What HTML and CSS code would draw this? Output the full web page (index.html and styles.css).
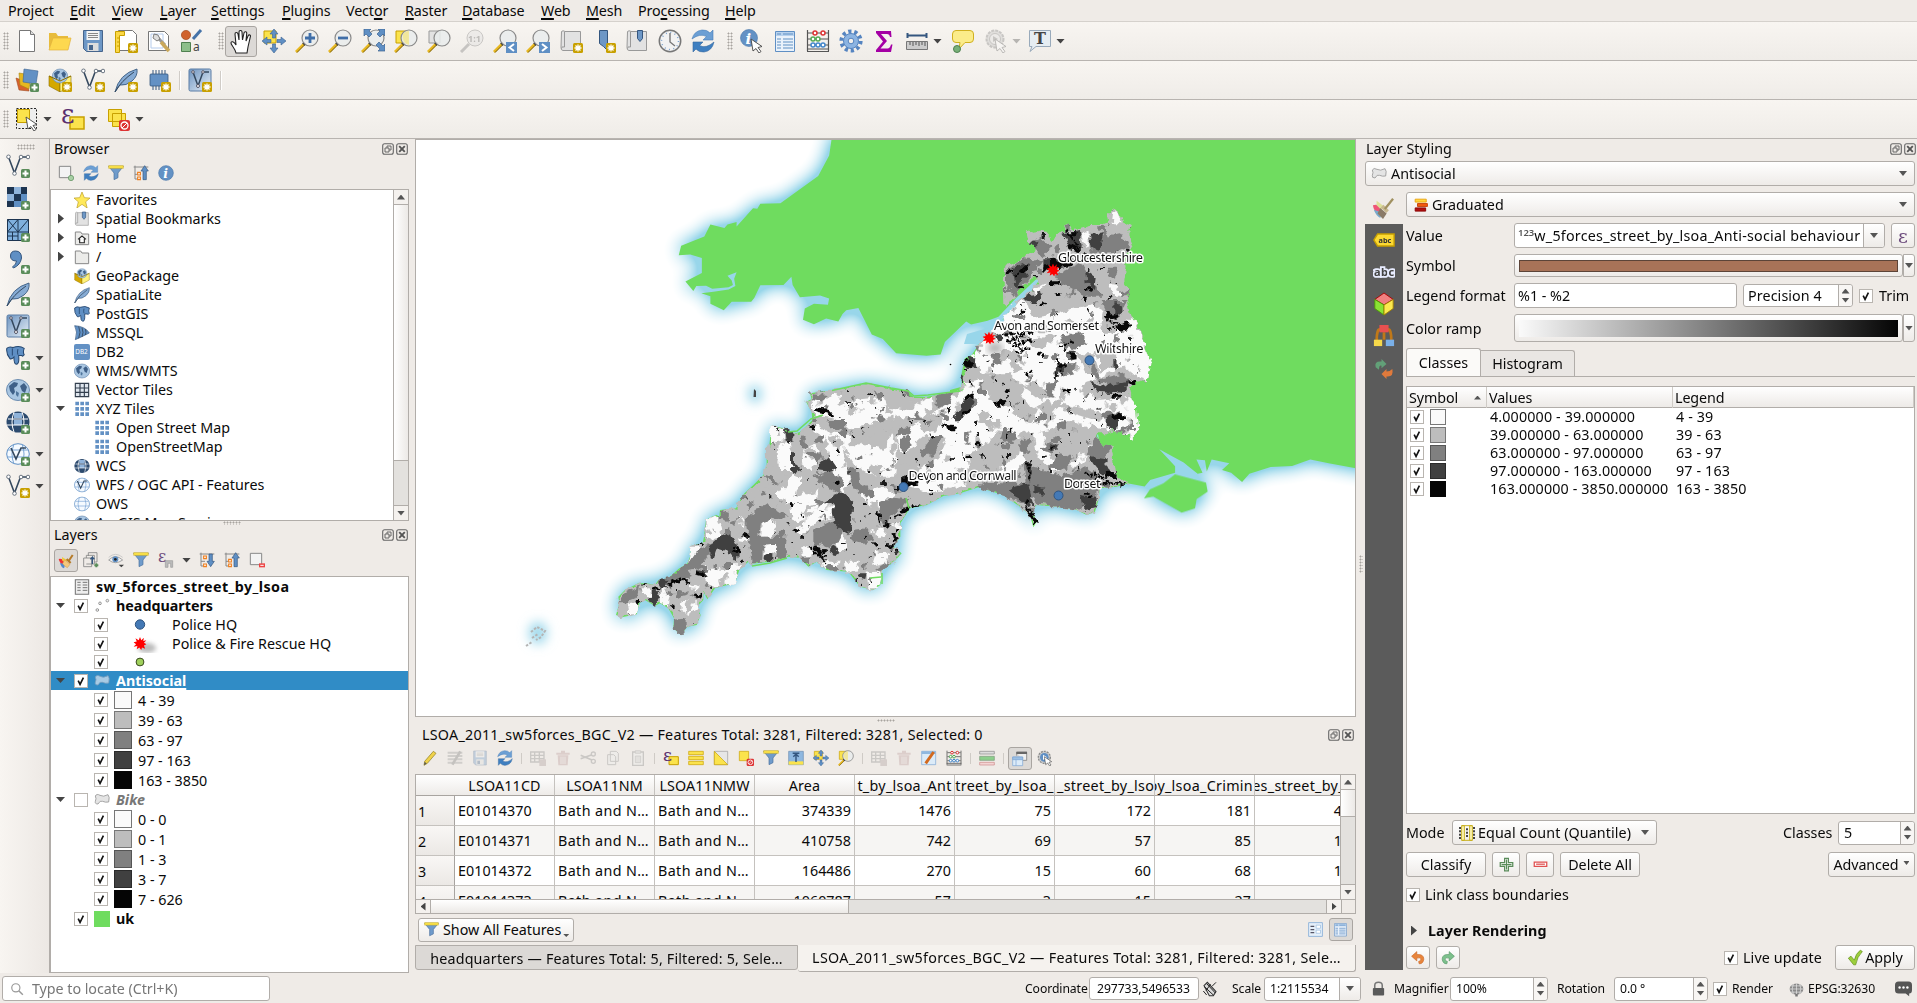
FILE: index.html
```html
<!DOCTYPE html>
<html lang="en">
<head>
<meta charset="utf-8">
<title>QGIS</title>
<link rel="stylesheet" href="styles.css">
</head>
<body>
<svg width="0" height="0" class="defs">
<defs>
<linearGradient id="gPale" x1="0" y1="0" x2="1" y2="1"><stop offset="0" stop-color="#6d94c0"/><stop offset="1" stop-color="#e8f0f8"/></linearGradient>
<symbol id="plus" viewBox="0 0 24 24"><rect x="15" y="15" width="9" height="9" rx="1.500" fill="#5a8c5a"/><path d="M19.500 16.500v6M16.500 19.500h6" stroke="#fff" stroke-width="2"/></symbol>
<symbol id="star" viewBox="0 0 24 24"><rect x="14" y="14" width="10" height="10" rx="1.500" fill="#c8a000"/><path d="M19 15.500v7M15.500 19h7M16.500 16.500l5 5M21.500 16.500l-5 5" stroke="#fff" stroke-width="1.300"/></symbol>
<symbol id="new" viewBox="0 0 24 24"><path d="M4.500 1.500h11l4 4v17h-15z" fill="#fff" stroke="#777"/><path d="M15.500 1.500v4h4" fill="#ddd" stroke="#777"/></symbol>
<symbol id="open" viewBox="0 0 24 24"><path d="M1 20V4h7l2 3h10v3H6z" fill="#e8bc3c"/><path d="M1 21L5 9h18l-3 12z" fill="#fdd84f" stroke="#e2b23a" stroke-width=".7"/></symbol>
<symbol id="save" viewBox="0 0 24 24"><path d="M2.500 1.500h19v21h-16l-3-3z" fill="#6d97c6" stroke="#46658c"/><path d="M5.500 2h13v9h-13z" fill="#f4f4f4"/><path d="M7 4.500h10M7 6.500h10M7 8.500h10" stroke="#888"/><path d="M6.500 14h11v8h-11z" fill="#ddd"/><path d="M8 16h4v5H8z" fill="#46658c"/></symbol>
<symbol id="layoutn" viewBox="0 0 24 24"><path d="M4.500 1.500h14l4 4v16h-18z" fill="#fff" stroke="#777"/><path d="M1.500 2.500h9v4h-5v17h-4z" fill="#fbd745" stroke="#c8a000"/><path d="M3 9h2M3 13h2M3 17h2" stroke="#c8a000"/><use href="#star"/></symbol>
<symbol id="layouts" viewBox="0 0 24 24"><path d="M1.500 2.500h16l4 4v15h-20z" fill="#fff" stroke="#777"/><path d="M4 5h12v14H4z" fill="#fff" stroke="#b6ccec"/><path d="M8 6l10 10" stroke="#999" stroke-width="3"/><path d="M7 5l4 1 2 4-3 2-4-3z" fill="#ddd" stroke="#666" stroke-width=".8"/><path d="M14 13l8 9" stroke="#caa85a" stroke-width="3.500"/></symbol>
<symbol id="stylem" viewBox="0 0 24 24"><circle cx="6" cy="6" r="4.600" fill="#d0622c" stroke="#a04a20" stroke-width=".7"/><path d="M13 10l8-9" stroke="#4673a8" stroke-width="3"/><path d="M1.500 13.500h9v9h-9z" fill="#8dbf8a" stroke="#4f8050"/><text x="13" y="22" font-size="12" fill="#444" class="sym">a</text></symbol>
<symbol id="hand" viewBox="0 0 24 24"><path d="M7 23c-1-5-5-8-5-10 0-2 3-2 5 2L6 4c0-2 2.500-2 3 0l1 6V2c0-2 3-2 3 0l.5 8L15 3c.5-2 3-1.500 2.700.5L17 11l2-5c1-2 3-1 2.300 1L19 17l-1 6z" fill="#fff" stroke="#222" stroke-width="1.100"/></symbol>
<symbol id="panm" viewBox="0 0 24 24"><path d="M2 2h12v12H2z" fill="#fbe34c" stroke="#c8a000"/><path d="M12 0l4 5h-2.500v4h-3V5H8zM12 24l-4-5h2.500v-4h3v4H16zM0 12l5-4v2.500h4v3H5V16zM24 12l-5 4v-2.500h-4v-3h4V8z" fill="#5f8fc4" stroke="#3c6390" stroke-width=".6"/></symbol>
<symbol id="lens" viewBox="0 0 24 24"><path d="M1 23l8.500-8.500" stroke="#e8b820" stroke-width="2.800"/><path d="M2 23.500l8-8" stroke="#5a4a10" stroke-width=".8"/><path d="M8.500 15.500l1.500-1.500" stroke="#222" stroke-width="3.500"/><circle cx="15" cy="9" r="8" fill="#e9ecec" fill-opacity=".85" stroke="#8a8a8a" stroke-width="1.200"/></symbol>
<symbol id="zin" viewBox="0 0 24 24"><use href="#lens"/><path d="M15 4v10M10 9h10" stroke="#3f6ea8" stroke-width="2.800"/></symbol>
<symbol id="zout" viewBox="0 0 24 24"><use href="#lens"/><path d="M10 9h10" stroke="#3f6ea8" stroke-width="2.800"/></symbol>
<symbol id="zfull" viewBox="0 0 24 24"><use href="#lens"/><path d="M3 0h7L8 2l3 3-3 3-3-3-2 2zM24 0v7l-2-2-3 3-3-3 3-3-2-2zM24 22h-7l2-2-4-4 3-3 4 4 2-2z" fill="#5f8fc4" stroke="#3c6390" stroke-width=".7"/></symbol>
<symbol id="zsel" viewBox="0 0 24 24"><path d="M2 2h11v12H2z" fill="#fbe34c" stroke="#c8a000"/><use href="#lens"/><path d="M9 5q5-4 6-3v14q-7-2-6-11z" fill="#f2e68c" opacity=".8"/></symbol>
<symbol id="zlay" viewBox="0 0 24 24"><path d="M2 2h11v12H2z" fill="#e2e2e2" stroke="#999"/><use href="#lens"/></symbol>
<symbol id="znat" viewBox="0 0 24 24"><g opacity=".35"><circle cx="15" cy="9" r="8" fill="#ddd" stroke="#777"/><path d="M1 23l8-8" stroke="#777" stroke-width="3"/><text x="8" y="12.500" font-size="9" font-weight="bold" fill="#555" class="sym">1:1</text></g></symbol>
<symbol id="zlast" viewBox="0 0 24 24"><use href="#lens"/><path d="M13 13h11v11H13z" fill="#5f8fc4"/><path d="M21 15l-4.500 3.500L21 22" fill="none" stroke="#fff" stroke-width="2"/></symbol>
<symbol id="znext" viewBox="0 0 24 24"><use href="#lens"/><path d="M13 13h11v11H13z" fill="#5f8fc4"/><path d="M16 15l4.500 3.500L16 22" fill="none" stroke="#fff" stroke-width="2"/></symbol>
<symbol id="sheet" viewBox="0 0 24 24"><path d="M6 2.500h15.500v19H4q-2 0-2-3l.5-16Q4 1 6 2.500z" fill="#e2e2e2" stroke="#999"/><path d="M5.500 3v15q-3-1-3 1.500" fill="none" stroke="#999"/></symbol>
<symbol id="bmnew" viewBox="0 0 24 24"><use href="#sheet"/><use href="#star"/></symbol>
<symbol id="bm3d" viewBox="0 0 24 24"><path d="M7.500 1.500h8v20l-4-4-4-3z" fill="#6d97c6" stroke="#34567f"/><use href="#star"/></symbol>
<symbol id="bm" viewBox="0 0 24 24"><use href="#sheet"/><path d="M12.500 1.500h5v8l-2.500 3-2.500-3z" fill="#6d97c6" stroke="#34567f"/></symbol>
<symbol id="clock" viewBox="0 0 24 24"><circle cx="12" cy="12" r="10.700" fill="#f2f2f2" stroke="#777" stroke-width="1.500"/><circle cx="12" cy="12" r="8.500" fill="none" stroke="#7aa0cc" stroke-dasharray="1 3.450" stroke-width="1.500"/><path d="M12 4v9l5 4" fill="none" stroke="#777" stroke-width="1.400"/></symbol>
<symbol id="refresh" viewBox="0 0 24 24"><path d="M1 10Q3 2 11 1q5-.5 8 3l3-3v10H12l3.500-3.500Q9 4 1 10z" fill="#6c9fd4" stroke="#477db8" stroke-width=".6"/><path d="M23 13q-2 9-10 10-5 .5-8-3l-3 3V13h10l-3.500 3.500Q15 20 23 13z" fill="#3f7fc0" stroke="#3568a0" stroke-width=".6"/></symbol>
<symbol id="cursor" viewBox="0 0 24 24"><path d="M11 10l2 12 3-2.500 3 4.500 2-1.500-3-4 4-1z" fill="#fff" stroke="#444" stroke-width=".9"/></symbol>
<symbol id="ident" viewBox="0 0 24 24"><circle cx="9" cy="9" r="8.500" fill="#6391c4" stroke="#4a77aa" stroke-width=".6"/><text x="5.500" y="14.500" font-size="15" font-style="italic" font-weight="bold" fill="#fff" class="serif">i</text><use href="#cursor"/></symbol>
<symbol id="table" viewBox="0 0 24 24"><path d="M2.500 2.500h19v20h-19z" fill="#eaf2fb" stroke="#5f8fc4"/><path d="M3 3h18v4H3z" fill="#b8d2ee"/><path d="M4 5h4M10 5h10M4 10h4M10 10h10M4 13h4M10 13h10M4 16h4M10 16h10M4 19h4M10 19h10" stroke="#5f8fc4" stroke-width="1.200"/></symbol>
<symbol id="abacus" viewBox="0 0 24 24"><path d="M1.500 1v21M22.500 1v21M1 22.500h22M1 20h22M2 4h20M2 10h20M2 16h20" stroke="#555" fill="none" stroke-width="1.200"/><g fill="#fff" stroke-width="1.500"><g stroke="#d33"><circle cx="9" cy="4" r="2"/><circle cx="17" cy="4" r="2"/></g><g stroke="#5a5"><circle cx="7" cy="10" r="2"/><circle cx="12" cy="10" r="2"/></g><g stroke="#48c"><circle cx="7" cy="16" r="2"/><circle cx="12" cy="16" r="2"/><circle cx="17" cy="16" r="2"/></g></g></symbol>
<symbol id="gear" viewBox="0 0 24 24"><circle cx="12" cy="12" r="9.600" fill="none" stroke="#5584c0" stroke-width="4" stroke-dasharray="3.200 2.830"/><circle cx="12" cy="12" r="7.500" fill="#8cb4e2" stroke="#5584c0"/><circle cx="12" cy="12" r="2.800" fill="#f3f0ec" stroke="#5584c0"/></symbol>
<symbol id="sum" viewBox="0 0 24 24"><path d="M4 2h15l.5 6h-1.500q-.5-3-3-3H9l6 7-6.500 7.500h7q2.500 0 3.500-4h1.500L19 23H4v-2l7-8.500L4 4z" fill="#a400a4"/></symbol>
<symbol id="measure" viewBox="0 0 24 24"><path d="M2 6.500h20M2.500 4v5M21.500 4v5" stroke="#34567f" stroke-width="2"/><path d="M1.500 12.500h21v8h-21z" fill="#ccc" stroke="#777"/><path d="M5 13v3M8 13v4M11 13v3M14 13v4M17 13v3M20 13v4" stroke="#555"/></symbol>
<symbol id="tip" viewBox="0 0 24 24"><path d="M5 1.500h14q3.500 0 3.500 3.500v5q0 3.500-3.500 3.500h-5L8 20l1-6.500H5Q1.500 13.500 1.500 10V5Q1.500 1.500 5 1.500z" fill="#fbec8a" stroke="#d0b020"/><circle cx="6" cy="20" r="3.500" fill="#78b078" stroke="#4f8050"/></symbol>
<symbol id="action" viewBox="0 0 24 24"><circle cx="11" cy="10" r="8.500" fill="#bbb" stroke="#777" stroke-width="2" stroke-dasharray="3 1"/><circle cx="11" cy="10" r="5.500" fill="#ddd" stroke="#777"/><path d="M9 7l5 3-5 3z" fill="#777"/><use href="#cursor"/></symbol>
<symbol id="textan" viewBox="0 0 24 24"><path d="M1.500 1.500h21v16H8l-6 5 2-5H1.500z" fill="#e6edf2" stroke="#9ab"/><text x="6" y="15" font-size="16" font-weight="bold" fill="#444" class="serif">T</text></symbol>
<symbol id="dsm" viewBox="0 0 24 24"><path d="M1 10l11 4 2 9-10-1z" fill="#d8622c" stroke="#a04a20" stroke-width=".6"/><path d="M4 5l12 2-2 14-9-4z" fill="#e6b820" stroke="#a88510" stroke-width=".6"/><path d="M9 1l14 2-2 13-13-2z" fill="#6391c4" stroke="#3c6390" stroke-width=".6"/><use href="#plus"/></symbol>
<symbol id="globe0" viewBox="0 0 24 24"><ellipse cx="12" cy="12" rx="11.500" ry="10.500" fill="#a9c6e2" stroke="#6d8db0"/><path d="M3 8l5-4 4 1-1 3-3 2 1 4-2 3-3-4zM14 8l4-3 3 4-2 6-3-2z" fill="#3f6088"/><path d="M10 13l3 2-1 4-2-2z" fill="#4f759c"/></symbol>
<symbol id="gpk" viewBox="0 0 24 24"><path d="M1 8l11 5v11L1 18z" fill="#d4a800" stroke="#8a6d00" stroke-width=".6"/><path d="M12 13l11-5v10l-11 6z" fill="#fff27a" stroke="#8a6d00" stroke-width=".6"/><use href="#globe0" x="4" y="0" width="16" height="16"/><path d="M1 8l11 5 11-5" fill="none" stroke="#8a6d00"/></symbol>
<symbol id="vec" viewBox="0 0 24 24"><path d="M2.500 3l6 16L14.500 3h7" fill="none" stroke="#34485e" stroke-width="1.600"/><g fill="#fff" stroke="#6a7480"><circle cx="2.500" cy="2.800" r="1.800"/><circle cx="8.500" cy="19.500" r="1.800"/><circle cx="15" cy="3" r="1.800"/><circle cx="22" cy="3" r="1.800"/></g></symbol>
<symbol id="feather" viewBox="0 0 24 24"><path d="M1 24Q5 6 23 1q1 7-5 12T6 17z" fill="#86abd4" stroke="#3c5c80" stroke-width=".9"/><path d="M1 24Q7 13 20 4" stroke="#34485e" fill="none"/></symbol>
<symbol id="chip" viewBox="0 0 24 24"><path d="M6 2v20M9 2v20M12 2v20M15 2v20M18 2v20" stroke="#34567f"/><rect x="3" y="6" width="18" height="12" rx="1" fill="#6391c4" stroke="#34567f" stroke-width=".8"/></symbol>
<symbol id="virt" viewBox="0 0 24 24"><rect x="1" y="1" width="22" height="22" rx="1.500" fill="url(#gPale)" stroke="#5b7da5"/><path d="M5 4l5 14L15 4h6" fill="none" stroke="#34485e" stroke-width="1.500"/><g fill="#fff" stroke="#556"><circle cx="5" cy="4" r="1.300"/><circle cx="10" cy="18" r="1.500"/><circle cx="15" cy="4" r="1.300"/></g></symbol>
<symbol id="raster" viewBox="0 0 24 24"><path d="M1 1h20v20H1z" fill="#5f8fc4"/><path d="M1 1h7v7H1zM15 1h6v7h-6zM8 8h7v7H8zM1 15h7v6H1z" fill="#1d3450"/><path d="M8 1h7v7H8zM1 8h7v7H1z" fill="#8fb3da"/></symbol>
<symbol id="mesh" viewBox="0 0 24 24"><path d="M1.500 1.500h21v21h-21z" fill="#7fb0de" stroke="#1d3450"/><path d="M12 1.500v21M1.500 14h21M1.500 1.500L12 14M12 1.500L1.500 14M12 14L22.500 1.500M6.500 14v8M1.500 18h10.500" stroke="#1d3450" fill="none"/></symbol>
<symbol id="comma" viewBox="0 0 24 24"><path d="M4.500 6q0-5 5-5 6 0 6 7-1 7-8 10l-1-1q4-3 4-6-6 0-6-5z" fill="#5f8fc4" stroke="#34567f"/></symbol>
<symbol id="eleph" viewBox="0 0 24 24"><path d="M1 3q3-3 8-1 8-3 14 1-2 5 0 8-2 3-3 1l-4 0q1 11-3 11-3 0-3-9-3 3-5 2Q0 10 1 3z" fill="#5f8fc4" stroke="#25476f" stroke-width="1.300"/><path d="M8 3v9M15 4q-1 4 0 7" stroke="#25476f" fill="none" stroke-width="1.200"/></symbol>
<symbol id="wcs" viewBox="0 0 24 24"><ellipse cx="12" cy="12" rx="11.500" ry="10.500" fill="#2c4a6e"/><path d="M8 3h8v5H8zM8 10h8v5H8z" fill="#8fb3da"/><path d="M2 9h20M1 15h21M8 2q-4 10 0 20M16 2q4 10 0 20" stroke="#fff" fill="none"/></symbol>
<symbol id="ows" viewBox="0 0 24 24"><ellipse cx="12" cy="12" rx="11.300" ry="10.300" fill="#f5faff" stroke="#5f8fc4"/><path d="M2 8h20M1 15h22M8 2q-4 10 0 20M16 2q4 10 0 20" stroke="#7aa5d4" fill="none"/></symbol>
<symbol id="wfs" viewBox="0 0 24 24"><use href="#ows"/><path d="M5 6l5 11L15 6h5" fill="none" stroke="#34485e" stroke-width="1.600"/></symbol>
<symbol id="favs" viewBox="0 0 24 24"><path d="M12 0l3.500 8.500 8.500.6-6.500 5.600L19.700 24 12 18.500 4.300 24l2.200-9.300L0 9.100l8.500-.6z" fill="#ffe95a" stroke="#b99c20"/></symbol>
<symbol id="folder" viewBox="0 0 24 24"><path d="M2 3h8l2 3h10v16H2z" fill="#ececea" stroke="#888" stroke-width="1.500"/></symbol>
<symbol id="home" viewBox="0 0 24 24"><use href="#folder"/><path d="M6 14l6-5 6 5M8.500 13v6h7v-6" fill="#fff" stroke="#222" stroke-width="1.600"/></symbol>
<symbol id="mssql" viewBox="0 0 24 24"><path d="M1 1q5 9 1 21 9-4 21-10Q17 2 1 1z" fill="#5f8fc4" stroke="#34567f"/><path d="M7 2q4 9 0 18M12 4q3 7 0 14M17 6q2 5 0 9" stroke="#34485e" fill="none" stroke-width="1.300"/></symbol>
<symbol id="db2" viewBox="0 0 24 24"><rect width="24" height="24" rx="3" fill="#6391c4"/><text x="2" y="15.500" font-size="9.500" fill="#fff" class="sym">DB2</text></symbol>
<symbol id="vt" viewBox="0 0 24 24"><path d="M2 2h20v20H2zM9 2v20M15.500 2v20M2 9h20M2 15.500h20" stroke="#333f4e" fill="#dfe6ee" stroke-width="1.700"/></symbol>
<symbol id="xyz" viewBox="0 0 24 24"><path d="M2 1h5.500v5.500H2zM9.500 1H15v5.500H9.500zM17 1h5.500v5.500H17zM2 9h5.500v5.500H2zM9.500 9H15v5.500H9.500zM17 9h5.500v5.500H17zM2 17h5.500v5.500H2zM9.500 17H15v5.500H9.500zM17 17h5.500v5.500H17z" fill="#6391c4"/></symbol>
<symbol id="funnel" viewBox="0 0 24 24"><path d="M1 2l8 10v10l6-3v-7l8-10z" fill="#6f9bcb" stroke="#4a6f9c"/><path d="M1 1h22v4H1z" fill="#fbe34c" stroke="#c0a010" stroke-width=".7"/></symbol>
<symbol id="addb" viewBox="0 0 24 24"><path d="M2 2h17v17H2z" fill="#f3f3f3" stroke="#888" stroke-width="1.500"/><circle cx="19.500" cy="19.500" r="4" fill="#a8cfa4" stroke="#5a8c5a"/></symbol>
<symbol id="collapse" viewBox="0 0 24 24"><path d="M3 1v20h8M1 3h22M3 14h6" stroke="#888" fill="none" stroke-width="1.500"/><path d="M7 11h4v4H7zM7 18h4v4H7z" fill="#fff" stroke="#f08020" stroke-width="1.800"/><path d="M17.500 1l5.500 8h-3v13h-5V9h-3z" fill="#5f8fc4" stroke="#34567f"/></symbol>
<symbol id="expand" viewBox="0 0 24 24"><path d="M3 1v20h8M1 3h22M3 14h6" stroke="#888" fill="none" stroke-width="1.500"/><path d="M7 6h4v4H7zM7 18h4v4H7z" fill="#fff" stroke="#f08020" stroke-width="1.800"/><path d="M17.500 22l5.500-8h-3V3h-5v11h-3z" fill="#5f8fc4" stroke="#34567f"/></symbol>
<symbol id="info" viewBox="0 0 24 24"><circle cx="12" cy="12" r="11" fill="#6391c4" stroke="#4a77aa"/><text x="8" y="19" font-size="19" font-style="italic" font-weight="bold" fill="#fff" class="serif">i</text></symbol>
<symbol id="brush" viewBox="0 0 24 24"><path d="M1 9q5-1 9 3l-3 6q-4-2-6-9z" fill="#e33"/><path d="M3 15l8 2-2 6Q5 22 3 15z" fill="#58c"/><path d="M6 6l8 5-3 4-5-4z" fill="#ec4"/><path d="M10 10l8 7-4 5q-4-2-7-6z" fill="#f4c87c" stroke="#d09a50" stroke-width=".8"/><path d="M13 9l6 6" stroke="#b57a28" stroke-width="3"/><path d="M16 12l6-9" stroke="#b57a28" stroke-width="3"/></symbol>
<symbol id="addgrp" viewBox="0 0 24 24"><path d="M8 6V1h13v14h-4M5 9V5h12v13H5M1 9h12v13H1z" fill="none" stroke="#888" stroke-width="1.300"/><path d="M14 18V8l-3 3M14 8l3 3" stroke="#34567f" fill="none" stroke-width="2"/><path d="M20 17v6M17 20h6" stroke="#5a8c5a" stroke-width="3"/></symbol>
<symbol id="eye" viewBox="0 0 24 24"><path d="M1 12Q11 2 22 12 11 20 1 12z" fill="#f2f2f2" stroke="#999" stroke-width="1.300"/><path d="M1 8Q11-1 22 8" stroke="#bbb" fill="none"/><circle cx="11" cy="11" r="4.500" fill="#5f8fc4"/><circle cx="11" cy="11" r="2" fill="#222"/><path d="M16 19h8l-4 4z" fill="#444"/></symbol>
<symbol id="epsf" viewBox="0 0 24 24"><text x="0" y="15" font-size="24" fill="#6b4a7c" class="serif">ε</text><path d="M11 23V13h11v10h-3v-6h-4v6z" fill="#bbb" stroke="#999"/></symbol>
<symbol id="rml" viewBox="0 0 24 24"><path d="M2 2h17v17H2z" fill="#f3f3f3" stroke="#888" stroke-width="1.500"/><path d="M15 17h9v6h-9z" fill="#e44"/><path d="M17 20h5" stroke="#fff" stroke-width="1.500"/></symbol>
<symbol id="tbl" viewBox="0 0 24 24"><path d="M2 1h20v22H2z" fill="#eee" stroke="#777" stroke-width="1.600"/><path d="M5 5h5M13 5h7M5 9h5M13 9h7M5 13h5M13 13h7M5 17h5M13 17h7" stroke="#777" stroke-width="1.500"/></symbol>
<symbol id="pts" viewBox="0 0 24 24"><g fill="#eee" stroke="#999" stroke-width="1.500"><circle cx="5" cy="18" r="2"/><circle cx="9" cy="8" r="2"/><circle cx="20" cy="4" r="2"/></g></symbol>
<symbol id="poly" viewBox="0 0 24 24"><path d="M2 6q2-4 7-1t12-1q3 3 1 11-5 1-9-1t-7 4q-5 0-4-4 2-4 0-8z" fill="#e4e4e4" stroke="#999" stroke-width="1.300"/></symbol>
<symbol id="polyb" viewBox="0 0 24 24"><path d="M2 6q2-4 7-1t12-1q3 3 1 11-5 1-9-1t-7 4q-5 0-4-4 2-4 0-8z" fill="#a9cbe4" stroke="#7ba0bf" stroke-width="1.300"/></symbol>
<symbol id="chk" viewBox="0 0 14 14"><path d="M3.700 6.500l2.200 4.500L9.800 3" fill="none" stroke="#111" stroke-width="1.900"/></symbol>
<symbol id="pencil" viewBox="0 0 24 24"><path d="M3 23l1-6L17 2l4 3L8 20z" fill="#f0d24a" stroke="#8a7a20"/><path d="M3 23l1-5 3 2z" fill="#555"/></symbol>
<symbol id="lpencil" viewBox="0 0 24 24"><path d="M1 4h22M1 9h22M1 14h22M1 19h22" stroke="#999" stroke-width="3"/><path d="M8 22L20 2" stroke="#777" stroke-width="4"/></symbol>
<symbol id="addft" viewBox="0 0 24 24"><path d="M1 3h20v15H1zM1 8h20M1 13h20M7 3v15M14 3v15" fill="none" stroke="#888" stroke-width="2"/><path d="M14 14h10v10H14z" fill="#a99"/></symbol>
<symbol id="trash" viewBox="0 0 24 24"><path d="M2 4h20v3H2zM9 1h6v3H9zM4 8h16l-1 15H5z" fill="#b99"/><path d="M9 10v11M12 10v11M15 10v11" stroke="#fff"/></symbol>
<symbol id="cut" viewBox="0 0 24 24"><path d="M1 8l17 7M1 13l17-6" stroke="#888" stroke-width="2.500"/><circle cx="20" cy="6" r="3" fill="none" stroke="#888" stroke-width="2"/><circle cx="20" cy="17" r="3" fill="none" stroke="#888" stroke-width="2"/></symbol>
<symbol id="copy" viewBox="0 0 24 24"><path d="M8 2h9l3 3v12H8zM4 7h9l3 3v12H4z" fill="#eee" stroke="#888" stroke-width="1.500"/></symbol>
<symbol id="paste" viewBox="0 0 24 24"><path d="M4 3h16v20H4z" fill="#eee" stroke="#888" stroke-width="2"/><path d="M8 1h8v4H8zM8 9h8v10H8z" fill="#ccc" stroke="#888"/></symbol>
<symbol id="epsy" viewBox="0 0 24 24"><path d="M9 10h14v12H9z" fill="#fbe34c" stroke="#c8a000" stroke-width="1.500"/><text x="0" y="16" font-size="26" fill="#5a2f6e" class="serif">ε</text></symbol>
<symbol id="selall" viewBox="0 0 24 24"><path d="M1 2h22v5H1zM1 9.500h22v5H1zM1 17h22v5H1z" fill="#fbe34c" stroke="#c8a000"/></symbol>
<symbol id="inv" viewBox="0 0 24 24"><path d="M2 2h20v20H2z" fill="#e6e6e6" stroke="#999"/><path d="M2 2v20h20z" fill="#fbe34c" stroke="#c8a000"/></symbol>
<symbol id="desel" viewBox="0 0 24 24"><path d="M2 2h14v14H2z" fill="#fbe34c" stroke="#c8a000"/><rect x="13" y="13" width="11" height="11" rx="2" fill="#d33"/><circle cx="18.500" cy="18.500" r="3.500" fill="none" stroke="#fff" stroke-width="1.300"/><path d="M16 21l5-5" stroke="#fff"/></symbol>
<symbol id="seltool" viewBox="0 0 24 24"><path d="M1.500 1.500h20v20h-20z" fill="#eee" stroke="#222" stroke-dasharray="2 1.500"/><path d="M2.500 2.500h12v13h-12z" fill="#fbe34c" stroke="#c8a000"/><use href="#cursor"/></symbol>
<symbol id="desel2" viewBox="0 0 24 24"><path d="M1.500 2.500h13v12h-13zM5.500 6.500h13v13h-13z" fill="#fbe34c" stroke="#c8a000"/><rect x="12" y="13" width="11" height="11" rx="2" fill="#d33"/><circle cx="17.500" cy="18.500" r="3.500" fill="none" stroke="#fff" stroke-width="1.300"/><path d="M15 21l5-5" stroke="#fff"/></symbol>
<symbol id="top" viewBox="0 0 24 24"><path d="M1 2h22v20H1z" fill="#8fb8e0" stroke="#6a8cb0"/><path d="M1 17h22v5H1z" fill="#fbe34c"/><path d="M7 5h10M12 18V6M8 10l4-4 4 4" stroke="#34567f" stroke-width="2.200" fill="none"/></symbol>
<symbol id="condf" viewBox="0 0 24 24"><path d="M1 2h22v4H1z" fill="#ddd" stroke="#888"/><path d="M1 9.500h22v6H1z" fill="#8ccf8c" stroke="#7a9a7a"/><path d="M1 18.500h22v4H1z" fill="#f3d4d4" stroke="#c88"/></symbol>
<symbol id="dock" viewBox="0 0 24 24"><path d="M7 2h15v12h-6M7 2v5" fill="#eee" stroke="#888" stroke-width="1.300"/><path d="M6.500 1h16v3.500h-16z" fill="#666"/><path d="M1 9h15v13H1z" fill="#dcebf8" stroke="#7aa5d4"/><path d="M1 9h15v4H1zM6 13v9" fill="#9cc0e4" stroke="#7aa5d4"/></symbol>
<symbol id="pin" viewBox="0 0 24 24"><circle cx="11" cy="11" r="9" fill="#ccc" stroke="#8a8a8a" stroke-width="2" stroke-dasharray="3 1.500"/><circle cx="11" cy="11" r="6.500" fill="#5f8fc4"/><path d="M9 7l6 4-6 4z" fill="#fff"/><use href="#cursor"/></symbol>
<symbol id="calcp" viewBox="0 0 24 24"><path d="M1 2h21v20H1z" fill="#dcebf8" stroke="#7aa5d4"/><path d="M1 2h21v4H1z" fill="#8fb8e0"/><path d="M7 20L19 3" stroke="#d2691e" stroke-width="4.500"/></symbol>
<symbol id="form" viewBox="0 0 24 24"><path d="M1 1h22v22H1z" fill="#e6f0fa" stroke="#8fb3da" stroke-width="1.500"/><path d="M4 7h6M4 12h6M4 17h6" stroke="#556" stroke-width="2"/><path d="M13 5h7v5h-7zM13 13h7v5h-7z" fill="#fff" stroke="#8fb3da"/></symbol>
<symbol id="brush2" viewBox="0 0 24 24"><path d="M1 9q6-2 10 3l-4 6q-5-2-6-9z" fill="#e57"/><path d="M2 14l9 3-2 6Q4 20 2 14z" fill="#7ac"/><path d="M5 4l8 6-3 4-5-5z" fill="#dce09a"/><path d="M9 12l7 6-4 6q-3-3-6-6z" fill="#8a7a68"/><path d="M11 10l6 6" stroke="#c8b890" stroke-width="4"/><path d="M14 13l9-11" stroke="#a09060" stroke-width="2.500"/></symbol>
<symbol id="label" viewBox="0 0 24 24"><path d="M5 5.500h18v13H5l-4-6.500z" fill="#fbd934" stroke="#c8a000" stroke-width="1.500"/><text x="6" y="15" font-size="8" font-weight="bold" fill="#333" class="sym">abc</text></symbol>
<symbol id="mask" viewBox="0 0 24 24"><text x="1" y="16.500" font-size="12" font-weight="bold" fill="#444" stroke="#e8ecff" stroke-width="4" paint-order="stroke" textLength="22" class="sym">abc</text></symbol>
<symbol id="cube" viewBox="0 0 24 24"><path d="M12 0l10 7-10 6L2 7z" fill="#f08080" stroke="#a00"/><path d="M2 7l10 6v11L2 17z" fill="#8ae234" stroke="#4e9a06"/><path d="M22 7l-10 6v11l10-7z" fill="#fce94f" stroke="#a08000"/></symbol>
<symbol id="diagram" viewBox="0 0 24 24"><path d="M12 8v8M8 5Q4 4 4 17M16 5q4-1 4 12" fill="none" stroke="#c07818" stroke-width="3"/><path d="M7 0h10v8H7z" fill="#e85050"/><path d="M1 16h9v7H1z" fill="#f6d84a"/><path d="M14 16h9v7h-9z" fill="#7ab0e8"/></symbol>
<symbol id="hist" viewBox="0 0 24 24"><path d="M2 10q-2-8 7-7V0l6 6-6 5V8q-3-1-3 5z" fill="#62a078"/><path d="M22 12q2 10-7 9v3l-6-6 6-6v3q4 0 7-3z" fill="#e07a3c"/></symbol>
<symbol id="undo" viewBox="0 0 24 24"><path d="M1 9l9-8v5q12-1 12 8-1 8-8 8l-1-4q4-1 4-4-1-3-7-2v5z" fill="#e8853c" stroke="#c8682a"/></symbol>
<symbol id="redo" viewBox="0 0 24 24"><path d="M23 9l-9-8v5Q2 5 2 14q1 8 8 8l1-4q-4-1-4-4 1-3 7-2v5z" fill="#7cc08c" stroke="#4f9060"/></symbol>
<symbol id="grad" viewBox="0 0 24 24"><path d="M2 2h19v5H2z" fill="#ffd83c" stroke="#e8a010" stroke-width="1.500"/><path d="M6 9.500h17v5H6z" fill="#f45c10" stroke="#c03c00" stroke-width="1.500"/><path d="M2 17h18v5.500H2z" fill="#b01010" stroke="#800" stroke-width="1.500"/></symbol>
<symbol id="quant" viewBox="0 0 24 24"><path d="M4 1h4v22H4zM16 1h4v22h-4zM4 1h16M4 23h16" fill="#fff8c0" stroke="#c8b020" stroke-width="1.500"/><path d="M1.500 3v18M22.500 3v18M12 5v15" stroke="#222" stroke-width="2.500" stroke-dasharray="3 2"/></symbol>
<symbol id="addc" viewBox="0 0 24 24"><path d="M9 2h6v7h7v6h-7v7H9v-7H2V9h7z" fill="#fff" stroke="#5a8c5a" stroke-width="2"/><path d="M12 4v16M4 12h16" stroke="#5a8c5a" stroke-width="2"/></symbol>
<symbol id="remc" viewBox="0 0 24 24"><path d="M2 8h20v7H2z" fill="#fff" stroke="#e05050" stroke-width="2"/><path d="M5 11.500h14" stroke="#e05050" stroke-width="2"/></symbol>
<symbol id="okc" viewBox="0 0 24 24"><path d="M2 13l4-3 5 6Q13 6 20 1l3 2q-8 8-10 20h-3z" fill="#9ccf3c" stroke="#5a8a10"/></symbol>
<symbol id="flt" viewBox="0 0 12 12"><rect x=".7" y=".7" width="10.600" height="10.600" rx="2" fill="none" stroke="#666" stroke-width="1.100"/><path d="M3 5h4v4H3zM5 5V3h4v4H7" fill="none" stroke="#666"/></symbol>
<symbol id="cls" viewBox="0 0 12 12"><rect x=".7" y=".7" width="10.600" height="10.600" rx="2" fill="none" stroke="#666" stroke-width="1.100"/><path d="M3.200 3.200l5.600 5.600M8.800 3.200L3.200 8.800" stroke="#555" stroke-width="1.900"/></symbol>
<symbol id="search" viewBox="0 0 24 24"><circle cx="10" cy="10" r="7" fill="none" stroke="#999" stroke-width="2"/><path d="M15 15l7 7" stroke="#999" stroke-width="2.500"/></symbol>
<symbol id="mouse" viewBox="0 0 24 24"><path d="M3 7l5-5 13 14-4 6-6 0z" fill="#ddd" stroke="#333" stroke-width="1.600"/><path d="M3 8l14 13M7 4l13 14M6 14l7-9M2 15l5 6M15 8l6-6" stroke="#222" stroke-width="1.500"/></symbol>
<symbol id="lock" viewBox="0 0 24 24"><path d="M6 11V7q0-5 6-5t6 5v4" fill="none" stroke="#777" stroke-width="2.500"/><rect x="3" y="11" width="18" height="12" rx="1.500" fill="#5a5a5a"/></symbol>
<symbol id="wgl" viewBox="0 0 24 24"><ellipse cx="12" cy="12" rx="11" ry="9" fill="#8a8a8a"/><path d="M1 12h22M3 7h18M3 17h18M12 3v18M7 4q-4 8 0 16M17 4q4 8 0 16" stroke="#eee" fill="none"/><path d="M10 20h4v4h-4z" fill="#777"/></symbol>
<symbol id="chat" viewBox="0 0 24 24"><path d="M5 2h14q5 0 5 5v7q0 5-4 5v4l-5-4H5q-5 0-5-5V7q0-5 5-5z" fill="#555"/><circle cx="6.500" cy="10.500" r="1.700" fill="#fff"/><circle cx="12" cy="10.500" r="1.700" fill="#fff"/><circle cx="17.500" cy="10.500" r="1.700" fill="#fff"/></symbol>
<symbol id="burst" viewBox="-10 -10 20 20"><path d="M0-10L2-5 6-9 5-4 10-5 6-1 10 1 6 3 8 8 3 6 2 10-1 6-5 9-4 4-10 5-6 1-10-2-5-3-7-8-2-5z" fill="#f00"/></symbol>
</defs>
</svg>

<nav class="menu"><span>Pro<u>j</u>ect</span><span><u>E</u>dit</span><span><u>V</u>iew</span><span><u>L</u>ayer</span><span><u>S</u>ettings</span><span><u>P</u>lugins</span><span>Vect<u>o</u>r</span><span><u>R</u>aster</span><span><u>D</u>atabase</span><span><u>W</u>eb</span><span><u>M</u>esh</span><span>Pro<u>c</u>essing</span><span><u>H</u>elp</span></nav>

<div class="bar">
<i class="grip"></i>
<svg><use href="#new"/></svg><svg><use href="#open"/></svg><svg><use href="#save"/></svg><svg><use href="#layoutn"/></svg><svg><use href="#layouts"/></svg><svg><use href="#stylem"/></svg>
<i class="grip g2"></i>
<span class="pressed"><svg><use href="#hand"/></svg></span><svg><use href="#panm"/></svg><svg><use href="#zin"/></svg><svg><use href="#zout"/></svg><svg><use href="#zfull"/></svg><svg><use href="#zsel"/></svg><svg><use href="#zlay"/></svg><svg><use href="#znat"/></svg><svg><use href="#zlast"/></svg><svg><use href="#znext"/></svg><svg><use href="#bmnew"/></svg><svg><use href="#bm3d"/></svg><svg><use href="#bm"/></svg><svg><use href="#clock"/></svg><svg><use href="#refresh"/></svg>
<i class="grip g3"></i>
<svg><use href="#ident"/></svg><svg><use href="#table"/></svg><svg><use href="#abacus"/></svg><svg><use href="#gear"/></svg><svg><use href="#sum"/></svg><svg><use href="#measure"/></svg><b class="dn"></b><svg><use href="#tip"/></svg><svg class="dim"><use href="#action"/></svg><b class="dn dim"></b><svg class="ta"><use href="#textan"/></svg><b class="dn"></b>
</div>
<div class="bar">
<i class="grip"></i>
<svg><use href="#dsm"/></svg><svg><use href="#gpk"/><use href="#star"/></svg><svg><use href="#vec"/><use href="#star"/></svg><svg><use href="#feather"/><use href="#star"/></svg><svg><use href="#chip"/><use href="#star"/></svg><i class="sep"></i><svg><use href="#virt"/><use href="#star"/></svg><i class="sep"></i>
</div>
<div class="bar">
<i class="grip"></i>
<svg><use href="#seltool"/></svg><b class="dn"></b><svg><use href="#epsy"/></svg><b class="dn"></b><svg><use href="#desel2"/></svg><b class="dn"></b>
</div>

<main>
<aside class="tools">
<i class="hgrip"></i>
<div><svg><use href="#vec"/><use href="#plus"/></svg></div>
<div><svg><use href="#raster"/><use href="#plus"/></svg></div>
<div><svg><use href="#mesh"/><use href="#plus"/></svg></div>
<div><svg><use href="#comma"/><use href="#plus"/></svg></div>
<div><svg><use href="#feather"/><use href="#plus"/></svg></div>
<div><svg><use href="#virt"/><use href="#plus"/></svg></div>
<div><svg><use href="#eleph" width="19" height="19"/><use href="#plus"/></svg><b class="dn"></b></div>
<div><svg><use href="#globe0"/><use href="#plus"/></svg><b class="dn"></b></div>
<div><svg><use href="#wcs"/><use href="#plus"/></svg></div>
<div><svg><use href="#wfs"/><use href="#plus"/></svg><b class="dn"></b></div>
<div><svg><use href="#vec"/><use href="#star"/></svg><b class="dn"></b></div>
</aside>

<section class="left">
<header class="title"><span>Browser</span><svg><use href="#flt"/></svg><svg><use href="#cls"/></svg></header>
<div class="mini b"><svg><use href="#addb"/></svg><svg><use href="#refresh"/></svg><svg><use href="#funnel"/></svg><svg><use href="#collapse"/></svg><svg><use href="#info"/></svg></div>
<div class="box browser">
<div class="tree">
<p><b></b><svg><use href="#favs"/></svg>Favorites</p>
<p><b class="rt"></b><svg><use href="#bm"/></svg>Spatial Bookmarks</p>
<p><b class="rt"></b><svg><use href="#home"/></svg>Home</p>
<p><b class="rt"></b><svg><use href="#folder"/></svg>/</p>
<p><b></b><svg><use href="#gpk"/></svg>GeoPackage</p>
<p><b></b><svg><use href="#feather"/></svg>SpatiaLite</p>
<p><b></b><svg><use href="#eleph"/></svg>PostGIS</p>
<p><b></b><svg><use href="#mssql"/></svg>MSSQL</p>
<p><b></b><svg><use href="#db2"/></svg>DB2</p>
<p><b></b><svg><use href="#globe0"/></svg>WMS/WMTS</p>
<p><b></b><svg><use href="#vt"/></svg>Vector Tiles</p>
<p><b class="dn"></b><svg><use href="#xyz"/></svg>XYZ Tiles</p>
<p class="l2"><b></b><svg><use href="#xyz"/></svg>Open Street Map</p>
<p class="l2"><b></b><svg><use href="#xyz"/></svg>OpenStreetMap</p>
<p><b></b><svg><use href="#wcs"/></svg>WCS</p>
<p><b></b><svg><use href="#wfs"/></svg>WFS / OGC API - Features</p>
<p><b></b><svg><use href="#ows"/></svg>OWS</p>
<p><b></b><svg><use href="#globe0"/></svg>ArcGIS Map Service</p>
</div>
<div class="vsb"><i><b class="up"></b></i><i class="thumb"></i><i class="groove"></i><i><b class="dns"></b></i></div>
</div>
<i class="hgrip mid"></i>
<header class="title"><span>Layers</span><svg><use href="#flt"/></svg><svg><use href="#cls"/></svg></header>
<div class="mini l"><span class="pressed"><svg><use href="#brush"/></svg></span><svg><use href="#addgrp"/></svg><svg><use href="#eye"/></svg><svg><use href="#funnel"/></svg><svg><use href="#epsf"/></svg><b class="dn"></b><svg><use href="#expand"/></svg><svg><use href="#collapse"/></svg><svg><use href="#rml"/></svg></div>
<div class="box layers">
<div class="tree">
<p><b></b><svg><use href="#tbl"/></svg><strong class="wide">sw_5forces_street_by_lsoa</strong></p>
<p><b class="dn"></b><svg class="ck"><use href="#chk"/></svg><svg><use href="#pts"/></svg><strong>headquarters</strong></p>
<p class="s"><svg class="ck"><use href="#chk"/></svg><svg class="pt" viewBox="0 0 40 19"><circle cx="18" cy="9.500" r="4.700" fill="#4479b5" stroke="#2f5480"/></svg>Police HQ</p>
<p class="s"><svg class="ck"><use href="#chk"/></svg><svg class="pt" viewBox="0 0 40 19"><ellipse cx="25" cy="14" rx="9" ry="5" fill="#bbb" class="soft"/><use href="#burst" x="11.500" y="3" width="13" height="13"/></svg>Police &amp; Fire Rescue HQ</p>
<p class="s"><svg class="ck"><use href="#chk"/></svg><svg class="pt" viewBox="0 0 40 19"><circle cx="18" cy="9" r="3.900" fill="#9fd05c" stroke="#3a4a20"/></svg></p>
<p class="sel"><b class="dn"></b><svg class="ck"><use href="#chk"/></svg><svg><use href="#polyb"/></svg><strong><u>Antisocial</u></strong></p>
<p class="c"><svg class="ck"><use href="#chk"/></svg><i class="k1"></i>4 - 39</p>
<p class="c"><svg class="ck"><use href="#chk"/></svg><i class="k2"></i>39 - 63</p>
<p class="c"><svg class="ck"><use href="#chk"/></svg><i class="k3"></i>63 - 97</p>
<p class="c"><svg class="ck"><use href="#chk"/></svg><i class="k4"></i>97 - 163</p>
<p class="c"><svg class="ck"><use href="#chk"/></svg><i class="k5"></i>163 - 3850</p>
<p><b class="dn"></b><svg class="ck"></svg><svg><use href="#poly"/></svg><strong class="off">Bike</strong></p>
<p class="c"><svg class="ck"><use href="#chk"/></svg><i class="k1"></i>0 - 0</p>
<p class="c"><svg class="ck"><use href="#chk"/></svg><i class="k2"></i>0 - 1</p>
<p class="c"><svg class="ck"><use href="#chk"/></svg><i class="k3"></i>1 - 3</p>
<p class="c"><svg class="ck"><use href="#chk"/></svg><i class="k4"></i>3 - 7</p>
<p class="c"><svg class="ck"><use href="#chk"/></svg><i class="k5"></i>7 - 626</p>
<p><b></b><svg class="ck"><use href="#chk"/></svg><i class="uk"></i><strong>uk</strong></p>
</div>
</div>
</section>

<section class="center">
<svg class="map" viewBox="416 140 939 576">
<defs>
<filter id="glow" filterUnits="userSpaceOnUse" x="396" y="120" width="1000" height="620" color-interpolation-filters="sRGB"><feGaussianBlur in="SourceAlpha" stdDeviation="9.500"/><feComponentTransfer result="b"><feFuncA type="linear" slope="2.200" intercept="-.03"/></feComponentTransfer><feFlood flood-color="#98d6ea"/><feComposite in2="b" operator="in"/><feMerge><feMergeNode/><feMergeNode in="SourceGraphic"/></feMerge></filter>
<filter id="rag" filterUnits="userSpaceOnUse" x="500" y="190" width="680" height="470" color-interpolation-filters="sRGB"><feTurbulence type="fractalNoise" baseFrequency=".16" numOctaves="2" seed="4"/><feDisplacementMap in="SourceGraphic" scale="8" xChannelSelector="R" yChannelSelector="G"/></filter>
<filter id="t1" filterUnits="userSpaceOnUse" x="600" y="200" width="560" height="440" color-interpolation-filters="sRGB"><feTurbulence type="fractalNoise" baseFrequency=".06" numOctaves="2" seed="11"/><feColorMatrix values="0 0 0 0 .741 0 0 0 0 .741 0 0 0 0 .741 25 0 0 0 -15.800"/></filter>
<filter id="t2" filterUnits="userSpaceOnUse" x="600" y="200" width="560" height="440" color-interpolation-filters="sRGB"><feTurbulence type="fractalNoise" baseFrequency=".08" numOctaves="2" seed="23"/><feColorMatrix values="0 0 0 0 .5 0 0 0 0 .5 0 0 0 0 .5 25 0 0 0 -17.300"/></filter>
<filter id="t3" filterUnits="userSpaceOnUse" x="600" y="200" width="560" height="440" color-interpolation-filters="sRGB"><feTurbulence type="fractalNoise" baseFrequency=".15" numOctaves="2" seed="37"/><feColorMatrix values="0 0 0 0 .1 0 0 0 0 .1 0 0 0 0 .1 25 0 0 0 -18.700"/></filter>
<filter id="soft"><feGaussianBlur stdDeviation="3"/></filter>
<filter id="halo" x="-1" y="-1" width="3" height="3"><feGaussianBlur stdDeviation="6"/></filter>
<path id="west" d="M1140 54L1085 62 1040 70 980 80 940 80 925 66 870 54 800 42 750 50 695 62 670 64 630 70 635 88 618 95 635 125 637 150 622 166 600 186 580 192 550 175 515 167 508 225 500 235 500 290 490 315 460 345 428 375 408 415 360 420 358 440 350 435 335 440 318 450 312 500 308 520 275 527 270 560 262 580 235 597 205 625 175 630 165 645 140 640 115 640 75 660 55 680 58 700 48 735 65 742 110 733 118 700 135 690 165 708 180 700 205 715 222 745 220 775 243 795 262 770 290 765 302 735 290 712 310 690 310 665 322 688 345 655 370 648 405 640 418 600 445 575 450 582 520 574 565 560 600 563 625 590 650 575 680 600 745 605 780 650 820 660 841 645 846 600 885 572 905 550 880 530 901 500 901 460 930 415 980 405 1030 378 1080 370 1140 350z"/>
<path id="east" d="M640 30L660 45 670 65 695 75 685 105 700 140 672 165 680 200 672 250 690 280 680 300 688 340 700 355 720 385 735 430 752 485 740 540 710 545 690 560 695 590 707 620 712 670 715 690 700 722 670 700 640 690 620 700 595 700 590 708 615 740 635 738 640 785 645 820 665 835 685 850 650 860 600 865 595 900 585 935 560 945 530 930 470 920 410 915 395 930 410 965 400 982 390 945 360 920 310 885 230 860 150 877V570L185 560 185 520 195 475 215 465 245 420 300 370 345 310 400 265 418 240 395 235 345 290 322 320 310 310 308 250 312 205 350 185 390 160 405 150 385 125 378 90 400 95 430 90 455 120 480 100 495 95 490 75 510 70 520 90 570 75 600 75 630 60 625 40z"/>
<clipPath id="cw"><use href="#west"/></clipPath><clipPath id="ce"><use href="#east"/></clipPath>
<clipPath id="all"><use href="#west" transform="translate(600 370) scale(.33333)"/><use href="#east" transform="translate(900 200) scale(.33333)"/></clipPath>
</defs>
<rect x="416" y="140" width="940" height="577" fill="#fff"/>
<g fill="#98d6ea" filter="url(#halo)"><ellipse cx="755" cy="394" rx="7" ry="9"/><ellipse cx="538" cy="633" rx="9" ry="11"/></g>
<g filter="url(#glow)">
<g fill="#6fdc5f">
<path transform="matrix(.60906 0 0 .37309 415 135)" d="M685 0L680 55 662 110 600 183 567 184 562 198 555 196 528 245 528 233 513 240 508 249 485 240 475 272 437 297 433 322 452 320 471 330 471 370 444 393 457 418 462 405 478 404 488 412 515 408 522 402 520 390 513 377 528 368 524 385 526 405 515 414 490 420 470 424 485 432 485 452 507 470 520 447 552 447 557 437 567 403 605 402 618 380 620 402 632 435 665 430 680 438 678 455 655 452 640 465 637 495 655 507 675 492 695 500 702 480 708 470 728 464 750 535 768 547 790 585 840 592 863 588 870 555 905 500 913 508 940 498 958 487 985 440 1022 383 1040 500 1120 790 1135 920 1165 932 1198 942 1207 925 1248 905 1248 888 1222 842 1262 878 1285 908 1293 905 1283 870 1297 872 1300 902 1308 870 1337 880 1325 898 1340 905 1358 930 1370 908 1405 890 1440 887 1470 870 1500 880 1600 910V0z"/>
<path transform="matrix(.33333 0 0 .33333 900 200)" d="M825 823L918 848 923 875 890 897 885 925 845 938 760 890 732 895 750 868 790 850z"/>
<use href="#west" transform="translate(600 370) scale(.33333)"/>
<use href="#east" transform="translate(900 200) scale(.33333)"/>
</g>
</g>
<path d="M754 389l2 2v6h-2.500z" fill="#444"/>
<g fill="none" stroke="#b4b4b4" stroke-width="2" stroke-dasharray="2.500 1.500"><path d="M531 632l6-5 8 4-4 6-5 3M532 638l6-4M526 646l6-4"/></g>
<path d="M1039 279l-12 10-16 17-5 12-18 10-21 6-3 10 17 0 22-15 15-14 9-17z" fill="#98d6ea"/>
<g filter="url(#rag)">
<g transform="translate(600 370) scale(.33333)"><g clip-path="url(#cw)">
<use href="#west" fill="#bdbdbd"/>
<g fill="#fafafa">
<path d="M635 95L680 65 720 75 715 110 760 90 850 80 860 110 930 120 990 80 1005 100 960 150 900 140 860 150 790 165 750 175 700 145 640 135z"/>
<path d="M680 190L760 195 790 225 850 240 870 190 890 210 890 260 885 320 830 320 790 300 760 280 730 230 750 330 730 370 700 320 680 230z"/>
<path d="M510 168L555 178 555 210 510 222zM540 220L570 215 575 300 530 300zM610 240L650 225 660 260 630 300 605 280zM635 180l20-20 30 30-10 20z"/>
<path d="M525 350L560 355 575 310 600 320 600 350 655 355 650 400 620 410 600 440 655 400 700 400 700 440 650 455 600 500 580 480 600 460 575 450 570 400 525 380z"/>
<path d="M485 455L530 445 530 475 510 500 480 500zM490 530L530 520 530 545 520 545 495 560zM320 450L350 435 370 500 320 510zM275 530L300 530 290 590 265 590zM315 590L370 600 400 580 420 580 405 640 340 650 315 630zM420 440L440 450 430 475 415 465z"/>
<path d="M935 170L1000 130 1050 100 1060 150 1100 170 1140 130V300L1060 290 1100 345 1000 370 930 350 960 290 1010 270 1040 200 960 200 930 240 900 250 890 180z"/>
<path d="M780 370L850 350 880 370 880 400 830 430 800 400zM810 480L850 470 860 490 840 505zM730 495L745 540 715 540 705 520zM830 540L865 555 860 580 815 590zM800 605L845 600 840 655 805 655zM660 575L780 575 770 605 680 600zM600 535l30 0 10 20-30 5zM875 460l25 0-10 25z"/>
<path d="M80 680L90 705 115 700 115 730 85 730zM120 655L150 655 155 680 125 680zM245 690L290 690 290 715 260 735 240 720zM180 655L215 655 200 710 180 700zM260 640L300 650 285 665zM415 500l30 0 0 15-30-5z"/>
</g>
<path fill="#bdbdbd" d="M780 180l40-15 45 20-5 45-50 5-30-25zM840 150l40-10 10 30-35 15zM950 150l90-30-30 60-40 10z"/>
</g></g>
<g transform="translate(900 200) scale(.33333)"><g clip-path="url(#ce)">
<path fill="#bdbdbd" d="M240 0H780V1000H240z"/>
<g fill="#fafafa">
<path d="M345 310L370 300 400 350 470 340 580 315 610 330 600 380 640 400 700 350 760 485 740 540 650 510 600 530 560 550 590 600 700 590 725 690 700 730 660 690 620 690 570 670 560 690 520 660 450 690 390 700 350 720 300 690 250 740 200 760 150 830V600L190 570 215 480 260 400z"/>
<path d="M545 100L565 92 570 135 558 140zM640 35L660 50 665 70 635 70zM625 250L650 255 665 290 645 290zM395 270L440 245 410 285zM510 800L575 730 570 765 530 800zM250 830l60-30 50-40 20 20-30 30-60 25zM400 690l30 5 20 60 40 50-30 10-50-50zM690 590l20 30-5 60-25-40z"/>
</g>
<g fill="#bdbdbd">
<path d="M250 520L330 520 370 560 350 610 310 620 290 600 240 560zM500 590L480 610 560 628 610 640 600 665 520 640 460 620zM440 700L540 670 580 700 530 760 500 740 430 730zM275 460L303 465 300 490 275 490zM320 465L370 470 350 490 370 510 345 520zM235 640L265 635 260 665 235 665zM370 560L410 540 450 590 420 600zM600 430L650 440 640 500 600 520zM200 760L270 740 260 800 210 820zM190 500l50 0-10 40-35 10zM400 370l40 0 0 30-30 0zM300 560l50 0 60 90-20 20-50-30zM530 460l50 0 20 60-40 0zM420 610l30-10 20 50-30 20zM250 660l50 0 0 20-40 0z"/>
</g>
</g></g>
<g clip-path="url(#all)">
<rect x="600" y="200" width="560" height="440" filter="url(#t1)"/>
<rect x="600" y="200" width="560" height="440" filter="url(#t2)"/>
<rect x="600" y="200" width="560" height="440" filter="url(#t3)"/>
</g>
<g transform="translate(600 370) scale(.33333)"><g clip-path="url(#cw)">
<g fill="#808080">
<path d="M640 318L690 305 730 330 720 370 670 345zM675 150L735 150 735 175 690 178zM895 175L935 170 925 200 890 195zM1000 195L1030 195 1020 220 1000 255 960 260 975 225zM1010 70L1065 65 1050 100 1010 115zM635 70L680 75 665 95 640 90z"/>
<path d="M440 440L500 400 530 420 560 440 545 450 530 445 480 460 475 500 560 500 555 570 535 570 525 525 490 525 485 580 455 580 445 500zM640 480L700 450 730 480 720 510 690 530 640 520zM760 480L800 475 825 510 780 520 750 510zM740 290L770 300 775 340 805 350 805 365 760 355z"/>
<path d="M840 400L880 380 930 385 900 420 870 440 860 470 840 450zM360 420L390 430 385 455 360 450zM300 530L340 520 350 540 320 560 300 595 260 600 275 620 230 635 180 655 170 630 240 595 270 575zM80 665L120 645 115 680 90 690 85 700 60 700 60 680zM220 750L260 745 260 780 240 795 220 775zM905 210L930 210 925 240 905 240zM650 200l20-5 0 20-18 0zM440 405l20-15 0 15-15 15zM420 375l22 0 0 12-20 0zM825 600l35-25 10 10-25 20zM600 560l30 0 0 30z"/>
</g>
<g fill="#404040">
<path d="M700 375L725 365 760 395 758 430 748 495 730 485 700 455 695 425 705 400 665 400zM660 280L685 258 710 295 690 305 650 300zM570 245L585 250 585 285 605 300 580 308 570 280zM555 175L580 190 580 215 560 212zM370 490L390 495 415 540 410 575 385 545 350 535 340 565 325 555 340 515zM490 560L520 545 520 570 500 580zM695 530L720 540 710 555 685 550zM780 610L800 610 795 630 775 625zM165 655L180 680 165 708 140 690zM175 625L205 630 200 655 180 655zM1060 150L1100 100 1110 110 1085 150zM1085 0h15l-5 50h-8zM740 300h10v10zM290 600l30 5-5 15-30-5z"/>
</g>
<g fill="none" stroke="#080808" stroke-linecap="round" stroke-width="11">
<path d="M1100 82l14-6M915 325l0 18 38-4M895 350l18 8M430 492l14 6M575 398v6M637 172l6 2M685 130l14 6M1045 175l24 0M710 338h1M585 482l10-4M905 425l18-4M940 408l18 4M860 525l16 0M884 495l6 8M858 462l8 6M825 522h1M404 538l8 6M290 612l16 4M212 640l26-12M115 695h1M165 655l6 0M218 710h1M290 676l10 4M650 120l26 4"/>
<path stroke-width="6" d="M910 243v3M1005 198l-6 5M945 270h1M1130 222v2M840 310h2M660 62l12-2M910 65v6M1105 262l5-4M990 360h5M980 335l8-8M625 465v2M655 455h5M795 497v2M740 545h1M130 642h8M250 625l15 12M295 522h14M835 430l5 30M885 440l15-5M885 545h5"/>
<path stroke-width="9" stroke-dasharray="3 11" d="M632 535l48 8-44 8 42 10M645 525l30 50M1085 130l20-20M890 480l-4 30M210 645l50-20M1025 165l40 10"/>
</g>
</g></g>
<g transform="translate(900 200) scale(.33333)"><g clip-path="url(#ce)">
<g fill="#808080">
<path d="M465 225L540 190 570 230 610 290 560 290 480 245zM385 130L420 110 455 140 430 170zM600 110L660 100 690 140 640 160 570 160zM315 215L370 175 430 180 400 220 345 290 315 250zM480 410L540 400 560 430 520 450 490 440zM470 490L530 490 520 520 480 530zM580 490L600 540 570 520zM605 300L680 300 660 350 630 360zM400 800L440 810 480 830 560 800 600 830 600 870 570 900 540 930 470 920 410 910 380 870 370 790zM590 710L635 745 600 790 560 760zM300 885L230 860 280 845 380 850 400 920zM440 725L475 735 460 765 420 750zM310 685L350 700 340 735 300 720zM480 760l40 10-20 40-60-5zM610 635l50 0-10 20-50 0zM270 460l34 5 0 25-25 0zM400 660l20 0 0 10-20 0zM360 720l20-10 5 40-20 20zM590 540l80-20 20 20-60 20zM195 600l40-10-5 30-30 5zM440 550l20 0 0 40-25-5zM640 700l50-30-20 30zM490 75l22-5 0 20-15 0zM630 200l20 0-5 40-20-20zM470 670l30-5-5 25-20-5z"/>
</g>
<g fill="#404040">
<path d="M335 205L385 190 375 235 345 265zM365 290L425 278 410 310 380 305zM490 100L540 90 545 150 510 150zM570 105L610 100 600 150 575 145zM385 130L420 125 400 145zM555 210L590 235 585 270 560 250zM570 545L610 560 690 540 670 575 640 580 590 575zM330 865L385 850 400 920 345 890zM565 770L615 778 635 820 600 820 580 795zM540 885L590 890 590 925 550 930zM620 650L660 640 650 690 620 685zM190 600L220 590 215 620 180 660 165 650zM375 780l12 0 12 50-12 15zM640 475l20 20-20 15zM430 175l50 0 30 20-80 20zM280 405l20-5 10 20-20 5zM640 310l20 0 10 30-30 10zM205 470l20 10 5 20-35 10zM470 500l25-15 0 30-35 5zM450 735l20 5-5 15-20-5zM180 520l15 5-5 30-10 0zM400 855l30 8 5 22-35-10zM505 455l25 0 0 20-25 5z"/>
</g>
<g fill="none" stroke="#080808" stroke-linecap="round" stroke-width="12">
<path stroke-width="20" d="M440 205l30-10 40-6M296 610l10-4M648 650l20 4M625 825l18 2M665 382l18-4M460 180v8"/>
<path d="M690 550l12-4M640 590h18M365 335h5M215 590v4M325 215h6M370 210h5M355 265h16M510 100l14 0M515 140l12 6M395 940l10 24-6 14M198 490l16 4M478 496l12 2M515 465l8 2M490 570l16 4M620 350l20-4M210 630l-18 10M320 573h3M232 733h2M550 295h2M430 310h2M567 265l6 4M455 250l20 0M470 285h10"/>
<path stroke-width="8" stroke-dasharray="2 11" d="M310 405l90-8-80 24 76 2-66 16 60 6-40 14M625 340l30 10-40 12 60 16-50 12M475 485l14 44M415 462l20 8M375 200l-30 30M560 820l50 10-44 14 110 12M620 845l60 8M195 480l30 20M500 90l40 60M380 520l20-10M380 905l10 40M455 745h10M330 690l-10 30M560 880l20 10M480 440l40-16M385 790l4 40"/>
</g>
</g></g>
</g>
<g fill="none" stroke="#6fdc5f" stroke-width="1.500"><path d="M832 390.500l34-7.500 25 5 17 3 6 5 14-1 32-4M788 432l9-1 14-12 12-4M752 566l18-3 17-5M906 498l3 10M870 578l11-1M882 573v11"/></g>
<ellipse cx="995" cy="348" rx="8" ry="6" fill="#777" opacity=".5" filter="url(#soft)"/>
<use href="#burst" x="982.500" y="331.500" width="13" height="13"/><use href="#burst" x="1046.500" y="263.500" width="13" height="13"/>
<g fill="#4479b5" stroke="#2f5480"><circle cx="903.500" cy="487" r="4.500"/><circle cx="1089.500" cy="360.300" r="4.500"/><circle cx="1058.500" cy="495.500" r="4.500"/></g>
<circle cx="950.500" cy="364.500" r=".8"/>
<g class="lbl"><text x="1058" y="262" textLength="85">Gloucestershire</text><text x="994" y="329.500" textLength="105">Avon and Somerset</text><text x="1095" y="352.500" textLength="48.500">Wiltshire</text><text x="908.500" y="479.500" textLength="108">Devon and Cornwall</text><text x="1064" y="487.500" textLength="36.500">Dorset</text></g>
</svg>
<i class="hgrip mid"></i>
<header class="title t2"><span>LSOA_2011_sw5forces_BGC_V2 — Features Total: 3281, Filtered: 3281, Selected: 0</span><svg><use href="#flt"/></svg><svg><use href="#cls"/></svg></header>
<div class="mini a"><svg><use href="#pencil"/></svg><svg class="dim"><use href="#lpencil"/></svg><svg class="dim"><use href="#save"/></svg><svg><use href="#refresh"/></svg><i class="sep"></i><svg class="dim"><use href="#addft"/></svg><svg class="dim"><use href="#trash"/></svg><svg class="dim"><use href="#cut"/></svg><svg class="dim"><use href="#copy"/></svg><svg class="dim"><use href="#paste"/></svg><i class="sep"></i><svg><use href="#epsy"/></svg><svg><use href="#selall"/></svg><svg><use href="#inv"/></svg><svg><use href="#desel"/></svg><svg><use href="#funnel"/></svg><svg><use href="#top"/></svg><svg><use href="#panm"/></svg><svg><use href="#zsel"/></svg><i class="sep"></i><svg class="dim"><use href="#addft"/></svg><svg class="dim"><use href="#trash"/></svg><svg><use href="#calcp"/></svg><svg><use href="#abacus"/></svg><i class="sep"></i><svg><use href="#condf"/></svg><i class="sep"></i><span class="pressed"><svg><use href="#dock"/></svg></span><svg><use href="#pin"/></svg></div>
<div class="box grid">
<div class="gtop">
<div class="rows">
<div class="gr gh"><span></span><span>LSOA11CD</span><span>LSOA11NM</span><span>LSOA11NMW</span><span>Area</span><span>t_by_lsoa_Ant</span><span>treet_by_lsoa_</span><span>_street_by_lso</span><span>by_lsoa_Crimin</span><span>es_street_by_</span></div>
<div class="gr"><span>1</span><span>E01014370</span><span>Bath and N…</span><span>Bath and N…</span><span>374339</span><span>1476</span><span>75</span><span>172</span><span>181</span><span>4</span></div>
<div class="gr alt"><span>2</span><span>E01014371</span><span>Bath and N…</span><span>Bath and N…</span><span>410758</span><span>742</span><span>69</span><span>57</span><span>85</span><span>1</span></div>
<div class="gr"><span>3</span><span>E01014372</span><span>Bath and N…</span><span>Bath and N…</span><span>164486</span><span>270</span><span>15</span><span>60</span><span>68</span><span>1</span></div>
<div class="gr alt"><span>4</span><span>E01014373</span><span>Bath and N…</span><span>Bath and N…</span><span>1060787</span><span>57</span><span>3</span><span>15</span><span>27</span><span></span></div>
</div>
<div class="vsb"><i><b class="up"></b></i><i class="thumb"></i><i class="groove"></i><i><b class="dns"></b></i></div>
</div>
<div class="hsb"><i><b class="lt"></b></i><i class="thumb"></i><i class="groove"></i><i><b class="rts"></b></i><i class="corner"></i></div>
</div>
<div class="foot"><span class="btn"><svg><use href="#funnel"/></svg>Show All Features<b class="dns"></b></span><svg><use href="#form"/></svg><span class="pressed"><svg><use href="#table"/></svg></span></div>
<div class="tabs"><span>headquarters — Features Total: 5, Filtered: 5, Sele…</span><span class="on">LSOA_2011_sw5forces_BGC_V2 — Features Total: 3281, Filtered: 3281, Sele…</span></div>
</section>

<i class="vgrip"></i>

<section class="right">
<header class="title"><span>Layer Styling</span><svg><use href="#flt"/></svg><svg><use href="#cls"/></svg></header>
<div class="btn combo"><svg><use href="#poly"/></svg>Antisocial<b class="dns"></b></div>
<div class="rmain">
<div class="rtabs"><div class="first"><svg><use href="#brush2"/></svg></div><svg><use href="#label"/></svg><svg><use href="#mask"/></svg><svg><use href="#cube"/></svg><svg><use href="#diagram"/></svg><svg class="sm"><use href="#hist"/></svg></div>
<div class="rbody">
<div class="btn combo gd"><svg><use href="#grad"/></svg>Graduated<b class="dns"></b></div>
<div class="fr r1"><label>Value</label><span class="inp"><small>123</small><em>w_5forces_street_by_lsoa_Anti-social behaviour</em><span class="dd"><b class="dns"></b></span></span><span class="btn eps">ε</span></div>
<div class="fr r2"><label>Symbol</label><span class="btn sw"><i></i></span><span class="btn thin"><b class="dns"></b></span></div>
<div class="fr r3"><label>Legend format</label><span class="inp">%1 - %2</span><span class="inp spin">Precision 4<span class="ud"><b class="up"></b><b class="dns"></b></span></span><svg class="ck"><use href="#chk"/></svg><span class="trim">Trim</span></div>
<div class="fr r4"><label>Color ramp</label><span class="btn sw ramp"><i></i></span><span class="btn thin"><b class="dns"></b></span></div>
<div class="ctabs"><span class="on">Classes</span><span>Histogram</span></div>
<div class="classes">
<div class="ch"><span>Symbol<b class="up"></b></span><span>Values</span><span>Legend</span></div>
<div class="cr"><span><svg class="ck"><use href="#chk"/></svg><i class="k1"></i></span><span>4.000000 - 39.000000</span><span>4 - 39</span></div>
<div class="cr"><span><svg class="ck"><use href="#chk"/></svg><i class="k2"></i></span><span>39.000000 - 63.000000</span><span>39 - 63</span></div>
<div class="cr"><span><svg class="ck"><use href="#chk"/></svg><i class="k3"></i></span><span>63.000000 - 97.000000</span><span>63 - 97</span></div>
<div class="cr"><span><svg class="ck"><use href="#chk"/></svg><i class="k4"></i></span><span>97.000000 - 163.000000</span><span>97 - 163</span></div>
<div class="cr"><span><svg class="ck"><use href="#chk"/></svg><i class="k5"></i></span><span>163.000000 - 3850.000000</span><span>163 - 3850</span></div>
</div>
<div class="fr m1"><label>Mode</label><span class="btn"><svg><use href="#quant"/></svg>Equal Count (Quantile)<b class="dns"></b></span><label class="cl">Classes</label><span class="inp spin">5<span class="ud"><b class="up"></b><b class="dns"></b></span></span></div>
<div class="fr m2"><span class="btn">Classify</span><span class="btn"><svg><use href="#addc"/></svg></span><span class="btn"><svg><use href="#remc"/></svg></span><span class="btn">Delete All</span><span class="btn adv">Advanced<b class="dns"></b></span></div>
<div class="fr m3"><svg class="ck"><use href="#chk"/></svg>Link class boundaries</div>
<div class="fr m4"><b class="rt"></b><strong>Layer Rendering</strong></div>
<div class="fr m5"><span class="btn"><svg><use href="#undo"/></svg></span><span class="btn"><svg><use href="#redo"/></svg></span><svg class="ck"><use href="#chk"/></svg><span class="lu">Live update</span><span class="btn ap"><svg><use href="#okc"/></svg>Apply</span></div>
</div>
</div>
</section>
</main>

<footer class="status">
<span class="inp find"><svg><use href="#search"/></svg>Type to locate (Ctrl+K)</span>
<span>Coordinate</span><span class="inp co">297733,5496533</span><svg class="mo"><use href="#mouse"/></svg><span>Scale</span><span class="inp">1:2115534<span class="dd"><b class="dns"></b></span></span><svg class="lk"><use href="#lock"/></svg><span>Magnifier</span><span class="inp spin mg">100%<span class="ud"><b class="up"></b><b class="dns"></b></span></span><span>Rotation</span><span class="inp spin">0.0 °<span class="ud"><b class="up"></b><b class="dns"></b></span></span><svg class="ck"><use href="#chk"/></svg><span class="s5">Render</span><svg class="gl"><use href="#wgl"/></svg><span>EPSG:32630</span><svg class="cb"><use href="#chat"/></svg>
</footer>
</body>
</html>
```
FILE: styles.css
```css
* { box-sizing: border-box; }
body { margin: 0; width: 1917px; height: 1003px; overflow: hidden; background: #efebe7; color: #0a0a0a; font: 14.3px/19px "Noto Sans", "Open Sans", sans-serif; display: flex; flex-direction: column; white-space: nowrap; }
.defs { position: absolute; }
p { margin: 0; }
svg { flex: none; display: block; }
i, b { flex: none; display: block; }
em { font-style: normal; }
.sym { font-family: "Noto Sans", sans-serif; }
.serif { font-family: "DejaVu Serif", serif; }
.soft { filter: blur(2px); }
.dim { opacity: .35; }

.menu { height: 21px; flex: none; display: grid; grid-template-columns: 62px 42px 48px 51px 71px 64px 59px 57px 79px 45px 52px 87px 60px; padding: 1px 0 0 8px; line-height: 20px; letter-spacing: -.12px; }
u { text-underline-offset: 2px; text-decoration-thickness: 2px; }
.bar { height: 39px; flex: none; display: flex; align-items: center; gap: 9px; padding-left: 3px; background: linear-gradient(#f8f5f1, #efece8); border-top: 1px solid #b8b4b0; }
.menu + .bar { border-color: #d5d1cc; }
.bar svg { width: 24px; height: 24px; }
.grip { width: 6px; height: 18px; margin-right: -3px; background: radial-gradient(circle, #a8a49f 0 .9px, transparent 1.1px) 0 0 / 3px 3px; }
.g2 { margin: 0 -4px 0 5px; }
.g3 { margin: 0 -2px 0 3px; }
.bar .pressed { width: 32px; height: 31px; margin: 0 -4px; padding: 3px; }
.pressed { background: #dcd9d6; border: 1px solid #a9a5a1; border-radius: 3px; }
.bar .sep { width: 1px; height: 19px; margin: 0 -1px; background: #d0ccc7; box-shadow: 1px 0 #fff; }
.dn { width: 9px; height: 5px; background: #444; clip-path: polygon(0 0, 100% 0, 50% 100%); }
.bar .dn { margin: 0 0 0 -5px; }
.bar .ta { margin-left: -2px; }
.dns { width: 8px; height: 5px; background: #555; clip-path: polygon(0 0, 100% 0, 50% 100%); }
.up { width: 8px; height: 5px; background: #555; clip-path: polygon(0 100%, 100% 100%, 50% 0); }
.rt { width: 6px; height: 10px; background: #444; clip-path: polygon(0 0, 100% 50%, 0 100%); }
.rts { width: 5px; height: 8px; background: #444; clip-path: polygon(0 0, 100% 50%, 0 100%); }
.lt { width: 5px; height: 8px; background: #444; clip-path: polygon(100% 0, 0 50%, 100% 100%); }

main { height: 835px; flex: none; display: flex; border-top: 1px solid #b8b4b0; }
.tools { width: 50px; border-right: 1px solid #b1ada9; background: linear-gradient(90deg, #f8f5f1, #ece8e4); padding: 5px 0 0 6px; }
.tools div { height: 32px; display: flex; align-items: center; gap: 5px; }
.tools svg { width: 24px; height: 24px; }
.hgrip { width: 18px; height: 6px; background: radial-gradient(circle, #a8a49f 0 .9px, transparent 1.1px) 0 0 / 3px 3px; }
.tools .hgrip { margin-left: 11px; }

.left { width: 359px; margin-right: 6px; display: flex; flex-direction: column; }
.title { height: 21px; display: flex; align-items: center; padding: 0 0 2px 4px; gap: 2px; flex: none; }
.title span { flex: 1; }
.title svg { width: 12px; height: 12px; }
.left .title svg:last-child { margin-right: 1px; }
.mini { height: 28px; display: flex; align-items: center; flex: none; }
.mini svg { width: 16px; height: 16px; }
.mini.b { gap: 9px; padding: 0 0 2px 8px; margin-bottom: 1px; }
.mini .pressed { width: 24px; height: 23px; padding: 3px; }
.mini.l { gap: 9px; padding-left: 4px; margin-bottom: 2px; }
.mini.l .pressed { margin-right: -4px; }
.mini.l .dn { margin: 0 -1px; }
.box { background: #fff; border: 1px solid #b1ada9; flex: none; }
.browser { height: 332px; display: flex; overflow: hidden; }
.tree { flex: 1; }
.tree p { height: 19px; display: flex; align-items: center; padding-left: 7px; }
.tree p svg { width: 16px; height: 16px; margin-right: 6px; }
.tree p > b { margin-right: 10px; width: 6px; }
.tree p > b.dn { width: 9px; margin: 0 9px 0 -2px; }
.tree p.l2 { padding-left: 27px; }
.vsb { width: 15px; border-left: 1px solid #b1ada9; display: flex; flex-direction: column; background: #e3e1de; }
.vsb i { height: 14px; display: flex; align-items: center; justify-content: center; background: #f4f1ee; }
.vsb .thumb { height: 257px; background: linear-gradient(90deg, #fff, #ece9e6); border: solid #b1ada9; border-width: 1px 0; }
.vsb .groove { flex: 1; background: #e3e1de; border-bottom: 1px solid #b1ada9; height: auto; }
.left .mid { height: 4px; margin-left: 173px; }
.layers { height: 397px; }
.tree svg.ck, .ck { width: 14px !important; height: 14px !important; background: #fff; border: 1px solid #b9b5b0; flex: none; }
.layers p > svg.ck { margin-right: 6px; }
.layers p.s { padding-left: 43px; }
.layers p.s:nth-child(5) { height: 18px; }
.layers .pt { width: 40px !important; height: 19px !important; margin: 0 10px 0 8px !important; }
.layers .sel { background: #308cc6; color: #fff; }
.layers p.c { height: 20px; padding-left: 43px; }
.layers p.c i { margin-right: 6px; width: 18px; height: 18px; }
.off { font-style: italic; color: #777; }
.k1 { background: #fafafa; border: 1px solid #777; }
.k2 { background: #bdbdbd; border: 1px solid #777; }
.k3 { background: #808080; border: 1px solid #555; }
.k4 { background: #404040; border: 1px solid #2a2a2a; }
.k5 { background: #050505; border: 1px solid #050505; }
.uk { width: 16px; height: 16px; background: #6fdc5f; margin-right: 6px; }
strong { letter-spacing: 0; }
strong.wide { letter-spacing: .4px; }

.center { width: 941px; display: flex; flex-direction: column; }
.map { width: 941px; height: 578px; border: 1px solid #b1ada9; background: #fff; }
.lbl { font: 12.8px "Noto Sans", sans-serif; fill: #111; stroke: #fff; stroke-width: 3px; stroke-linejoin: round; paint-order: stroke; }
.title.t2 { height: 21px; padding: 0 2px 2px 7px; letter-spacing: .26px; }
.center .mid { margin: 2px auto 3px; height: 3px; }
.mini.a { gap: 9px; padding-left: 7px; height: 24px; margin-bottom: 4px; }
.mini.a .sep { width: 1px; height: 11px; background: #cfcbc6; margin: 0 -1px; }
.mini.a .pressed { margin: 0 -4px; }
.grid { height: 140px; }
.gtop { height: 124px; display: flex; overflow: hidden; }
.rows { flex: 1; overflow: hidden; }
.gr { display: grid; grid-template-columns: 39px repeat(9, 100px); height: 30px; background: #fff; letter-spacing: .03px; }
.gr.alt { background: #f6f5f3; }
.gr span { border: solid #c5c2be; border-width: 0 1px 1px 0; line-height: 29px; padding: 0 3px; text-align: right; overflow: hidden; }
.gr span:first-child { text-align: left; padding-left: 2px; background: linear-gradient(#f9f7f5, #ebe8e5); border-right-color: #a8a4a0; line-height: 31px; }
.gr span:nth-child(2), .gr span:nth-child(3), .gr span:nth-child(4) { text-align: left; }
.gr span:nth-child(3), .gr span:nth-child(4) { letter-spacing: .4px; }
.gr span:last-child { width: 87px; padding-right: 0; border-right: 0; }
.gr.gh { height: 21px; background: linear-gradient(#fff, #edeae7); }
.gr.gh span:nth-child(n) { display: flex; justify-content: center; line-height: 21px; border-bottom-color: #a8a4a0; padding: 0 1px; letter-spacing: .15px; }
.gr.gh span:first-child { background: none; border-right: 0; }
.gr.gh span:nth-child(n+6) { letter-spacing: .3px; }
.gr.gh span:nth-child(8) { justify-content: flex-start; padding-left: 2px; }
.gr.gh span:nth-child(9) { justify-content: flex-end; }
.grid .vsb .thumb { height: 28px; }
.hsb { height: 14px; display: flex; background: #e3e1de; border-top: 1px solid #b1ada9; }
.hsb i { width: 14px; background: #f4f1ee; display: flex; align-items: center; justify-content: center; }
.hsb .thumb { width: 419px; background: linear-gradient(#fff, #ece9e6); border: solid #b1ada9; border-width: 0 1px; }
.hsb .groove { flex: 1; background: #e3e1de; border-right: 1px solid #b1ada9; }
.hsb .corner { border-left: 1px solid #b1ada9; background: #efebe7; }
.foot { height: 31px; display: flex; align-items: center; padding: 0 3px; gap: 6px; }
.foot svg { width: 15px; height: 15px; }
.foot .btn { margin-right: auto; width: 156px; height: 24px; padding-left: 5px; gap: 4px; }
.foot .btn .dns { width: 6px; height: 3px; margin: 12px 0 0 -2px; }
.foot .pressed { width: 24px; height: 23px; padding: 3px; }
.btn { display: flex; align-items: center; justify-content: flex-start; border: 1px solid #b1ada9; border-radius: 3px; background: linear-gradient(#fff, #eeebe8); flex: none; }
.tabs { display: flex; height: 27px; align-items: flex-start; }
.tabs span { width: 383px; height: 25px; border: 1px solid #b1ada9; border-radius: 0 0 3px 3px; background: #dcd9d6; text-align: center; line-height: 25px; letter-spacing: .18px; }
.tabs .on { width: 558px; height: 27px; border-top: 0; border-left: 0; background: #f5f2ee; letter-spacing: .3px; }

.vgrip { width: 4px; height: 18px; margin: 416px 2px 0 3px; background: radial-gradient(circle, #a8a49f 0 .9px, transparent 1.1px) 0 0 / 3px 3px; }
.right { width: 552px; padding-right: 2px; display: flex; flex-direction: column; }
.right .title { padding-left: 1px; height: 22px; margin-right: -1px; padding-bottom: 3px; }
.combo { height: 25px; padding: 0 7px 0 5px; gap: 4px; }
.combo svg { width: 16px; height: 16px; }
.combo > .dns { margin-left: auto; }
.rmain { flex: 1; display: flex; }
.rtabs { width: 38px; background: #5b5b5b; display: flex; flex-direction: column; align-items: center; height: 784px; }
.rtabs svg { width: 22px; height: 24px; margin-bottom: 8px; }
.rtabs .first { width: 38px; height: 38px; background: #efebe7; padding: 10px 0 0 7px; margin-bottom: 4px; }
.rtabs .sm { height: 20px; margin-top: 3px; }
.rbody { flex: 1; padding: 6px 0 0 3px; display: flex; flex-direction: column; }
.gd { padding-left: 7px; }
.gd svg { width: 14px; height: 16px; }
.fr { display: flex; align-items: center; flex: none; }
.fr > label { width: 108px; }
.inp { display: flex; align-items: center; background: #fff; border: 1px solid #b1ada9; border-radius: 3px; flex: none; }
.dd { margin-left: auto; width: 21px; height: 100%; border-left: 1px solid #b1ada9; background: linear-gradient(#fff, #eeebe8); display: flex; align-items: center; justify-content: center; border-radius: 0 3px 3px 0; }
.ud { margin-left: auto; width: 14px; height: 100%; border-left: 1px solid #b1ada9; background: #f8f6f4; display: flex; flex-direction: column; align-items: center; justify-content: center; gap: 4px; border-radius: 0 3px 3px 0; }
.r1 { height: 25px; margin-top: 6px; }
.r1 .inp { width: 371px; height: 25px; padding-left: 3px; }
.r1 small { font-size: 9.5px; line-height: 14px; margin-bottom: 5px; color: #555; letter-spacing: 0; font-weight: 600; }
.r1 em { letter-spacing: .24px; }
.eps { width: 24px; height: 25px; margin-left: 6px; justify-content: center; color: #6b4a7c; font: 19px "DejaVu Serif", serif; }
.r2 { height: 23px; margin-top: 6px; }
.sw { width: 389px; height: 23px; padding: 0 4px; }
.sw i { flex: 1; height: 12px; background: #a87358; border: 1px solid #5c4438; }
.thin { width: 12px; height: 100%; justify-content: center; border-radius: 0 3px 3px 0; }
.r3 { height: 25px; margin-top: 6px; }
.r3 > .inp { width: 223px; height: 25px; padding-left: 3px; }
.r3 > .spin { width: 110px; height: 23px; margin: 0 6px 0 6px; padding-left: 4px; letter-spacing: .1px; }
.trim { margin-left: 6px; }
.r4 { height: 28px; margin-top: 6px; }
.ramp { height: 28px; }
.ramp i { height: 17px; border: 0; background: linear-gradient(90deg, #fafafa, #050505); }
.ctabs { display: flex; height: 29px; margin-top: 6px; align-items: flex-end; border-bottom: 1px solid #b1ada9; }
.ctabs span { width: 94px; height: 26px; border: 1px solid #b1ada9; border-left: 0; border-bottom: 0; text-align: center; background: #e9e6e3; line-height: 26px; border-radius: 0 3px 0 0; }
.ctabs .on { width: 75px; height: 28px; border-left: 1px solid #b1ada9; background: #fbfaf8; line-height: 28px; border-radius: 3px 3px 0 0; }
.classes { height: 428px; margin-top: 9px; border: 1px solid #b1ada9; background: #fff; flex: none; letter-spacing: .14px; }
.ch, .cr { display: grid; grid-template-columns: 80px 186px 1fr; }
.ch { height: 21px; border-bottom: 1px solid #b1ada9; background: linear-gradient(#fff, #edeae7); letter-spacing: -.1px; }
.ch span { border-right: 1px solid #cfcbc6; padding-left: 2px; line-height: 21px; display: flex; align-items: center; }
.ch .up { margin-left: auto; margin-right: 5px; width: 7px; height: 4px; }
.cr { height: 18px; line-height: 18px; }
.cr span { padding-left: 3px; display: flex; align-items: center; }
.cr i { width: 16px; height: 16px; margin-left: 6px; }
.m1 { height: 25px; margin-top: 6px; }
.m1 > label { width: 46px; }
.m1 .btn { width: 205px; height: 25px; padding: 0 7px 0 6px; gap: 3px; letter-spacing: .08px; }
.m1 .btn svg { width: 16px; height: 16px; }
.m1 .btn b { margin-left: auto; }
.m1 .cl { margin-left: auto; width: 55px; }
.m1 .spin { width: 77px; height: 24px; padding-left: 5px; }
.m2 { height: 25px; margin-top: 7px; gap: 6px; }
.m2 .btn { height: 25px; width: 80px; justify-content: center; }
.m2 .btn:nth-child(2), .m2 .btn:nth-child(3) { width: 28px; }
.m2 svg { width: 15px; height: 15px; }
.m2 .adv { margin-left: auto; width: 87px; gap: 5px; letter-spacing: -.1px; }
.adv b { width: 6px; height: 4px; margin-bottom: 3px; }
.m3 { height: 19px; margin-top: 8px; gap: 5px; }
.m4 { height: 19px; margin-top: 17px; gap: 11px; padding-left: 5px; }
.m4 strong { letter-spacing: .1px; }
.m5 { height: 25px; margin-top: 5px; gap: 6px; }
.m5 > .btn { width: 24px; height: 23px; justify-content: center; }
.m5 .btn svg { width: 14px; height: 14px; }
.m5 > .ck { margin-left: auto; }
.m5 .lu { margin-right: 7px; letter-spacing: .1px; margin-left: -1px; }
.m5 > .ap { width: 80px; height: 25px; gap: 2px; }
.m5 .ap svg { width: 16px; height: 17px; }

.status { flex: 1; display: grid; grid-template-columns: 1023px 64px 110px 33px 32px 97px 33px 56px 107px 57px 94px 20px 61px 19px 86px 22px; align-items: center; padding: 1px 0 0 2px; font-size: 12.2px; letter-spacing: -.08px; }
.status .inp { height: 24px; padding-left: 5px; }
.status .find { width: 268px; height: 25px; font-size: 14.3px; color: #777; gap: 8px; padding-left: 7px; letter-spacing: -.05px; }
.find svg { width: 14px; height: 14px; }
.status .co { padding-left: 7px; height: 23px; }
.status .mg { width: 98px; }
.mo { width: 16px; height: 16px; margin-left: 3px; }
.lk { width: 15px; height: 17px; margin-left: 10px; }
.status > .ck { margin-left: 5px; }
.s5 { margin-left: 4px; }
.gl { width: 15px; height: 16px; }
.cb { width: 17px; height: 17px; margin-left: 1px; }
```
